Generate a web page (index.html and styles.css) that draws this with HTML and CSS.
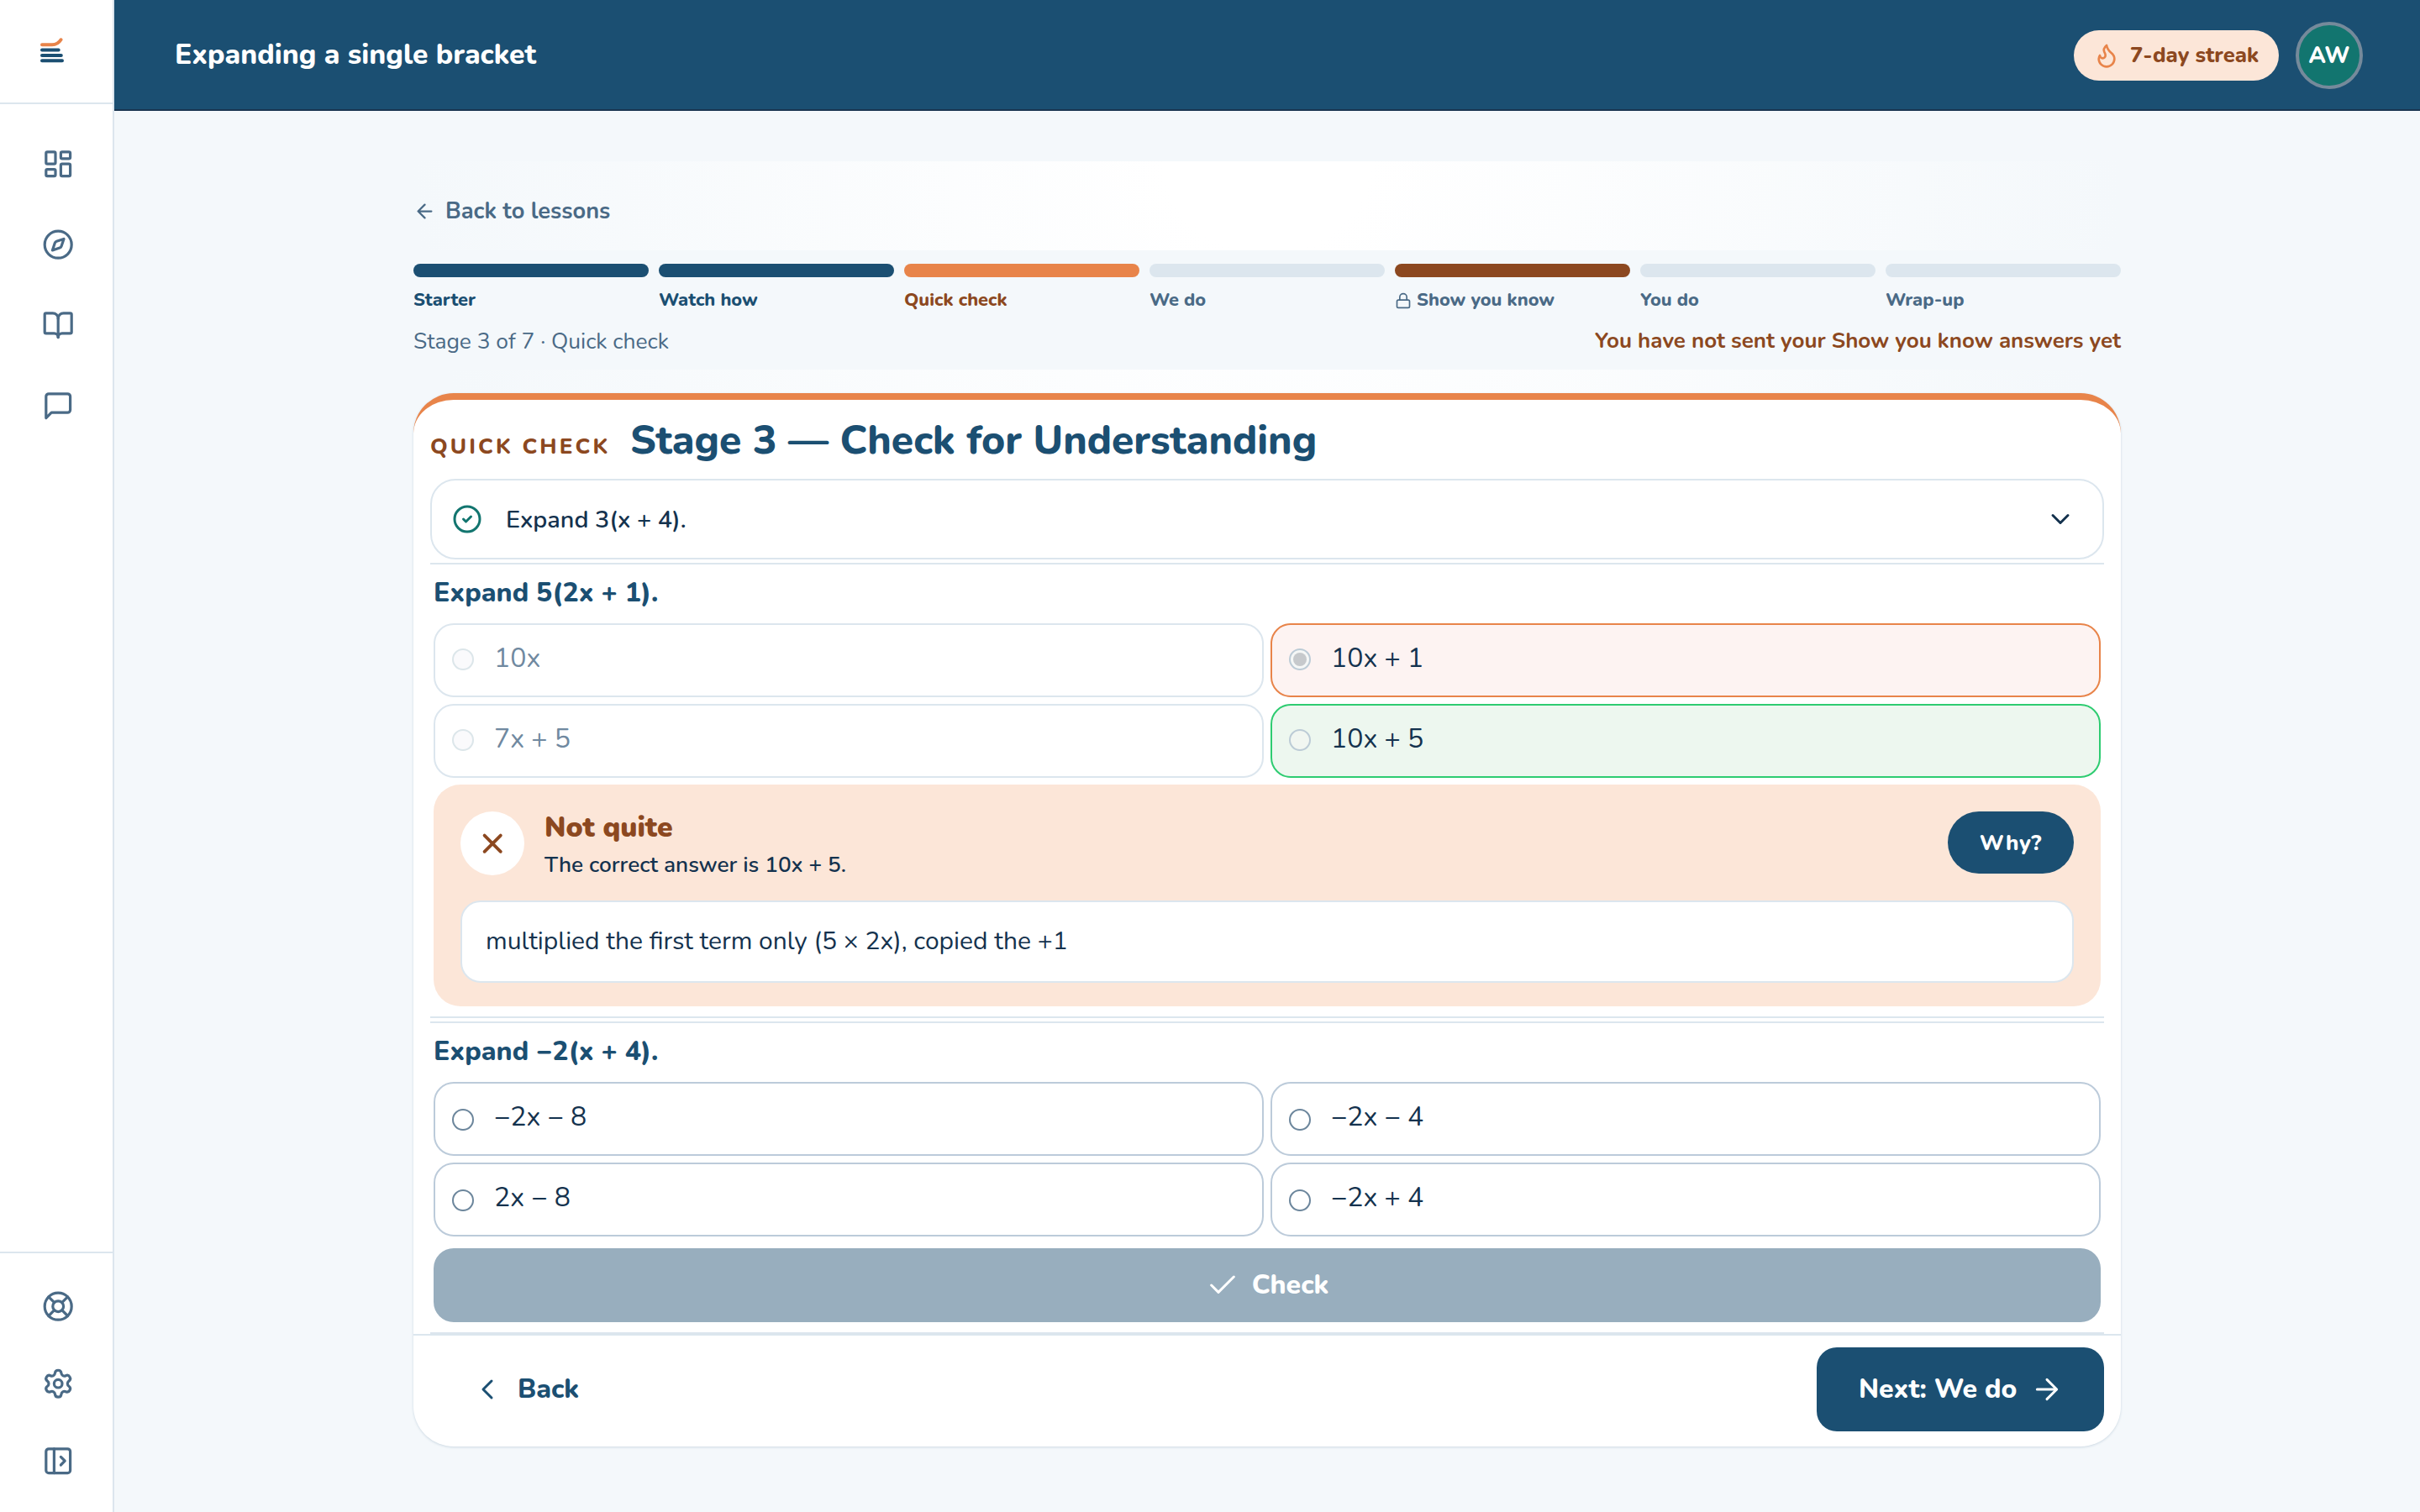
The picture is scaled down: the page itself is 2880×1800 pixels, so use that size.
FILE: index.html
```html
<!DOCTYPE html>
<html lang="en">
<head>
  <meta charset="UTF-8" />
  <meta name="viewport" content="width=device-width, initial-scale=1.0"/>
  <title>Expanding a single bracket</title>
  <link rel="stylesheet" href="styles.css">
</head>
<body>

  <aside class="sidebar">
    <div class="logo">
      <svg width="30" height="30" viewBox="0 0 30 30" fill="none" stroke="#1b4f72" stroke-width="4" stroke-linecap="round">
        <path d="M3 8.300h12c5 0 8-2 10.500-6" stroke="#e8844a"/>
        <path d="M3 14.500h19.700M3 21h22.800M3 27.300h24"/>
      </svg>
    </div>
    <nav class="nav">
      <a class="nav-link"><svg class="icon" viewBox="0 0 24 24"><rect width="7" height="9" x="3" y="3" rx="1"/><rect width="7" height="5" x="14" y="3" rx="1"/><rect width="7" height="9" x="14" y="12" rx="1"/><rect width="7" height="5" x="3" y="16" rx="1"/></svg></a>
      <a class="nav-link"><svg class="icon" viewBox="0 0 24 24"><circle cx="12" cy="12" r="10"/><path d="m16.24 7.760-1.804 5.411a2 2 0 0 1-1.265 1.265L7.760 16.240l1.804-5.411a2 2 0 0 1 1.265-1.265z"/></svg></a>
      <a class="nav-link"><svg class="icon" viewBox="0 0 24 24"><path d="M12 7v14"/><path d="M3 18a1 1 0 0 1-1-1V4a1 1 0 0 1 1-1h5a4 4 0 0 1 4 4 4 4 0 0 1 4-4h5a1 1 0 0 1 1 1v13a1 1 0 0 1-1 1h-6a3 3 0 0 0-3 3 3 3 0 0 0-3-3z"/></svg></a>
      <a class="nav-link"><svg class="icon" viewBox="0 0 24 24"><path d="M21 15a2 2 0 0 1-2 2H7l-4 4V5a2 2 0 0 1 2-2h14a2 2 0 0 1 2 2z"/></svg></a>
    </nav>
    <div class="nav-bottom">
      <a class="nav-link"><svg class="icon" viewBox="0 0 24 24"><circle cx="12" cy="12" r="10"/><path d="m4.930 4.930 4.240 4.240M14.830 9.170l4.240-4.240M14.830 14.830l4.240 4.240M9.170 14.830l-4.240 4.240"/><circle cx="12" cy="12" r="4"/></svg></a>
      <a class="nav-link"><svg class="icon" viewBox="0 0 24 24"><path d="M9.671 4.136a2.340 2.340 0 0 1 4.659 0 2.340 2.340 0 0 0 3.319 1.915 2.340 2.340 0 0 1 2.330 4.033 2.340 2.340 0 0 0 0 3.831 2.340 2.340 0 0 1-2.330 4.033 2.340 2.340 0 0 0-3.319 1.915 2.340 2.340 0 0 1-4.659 0 2.340 2.340 0 0 0-3.320-1.915 2.340 2.340 0 0 1-2.330-4.033 2.340 2.340 0 0 0 0-3.831A2.340 2.340 0 0 1 6.350 6.051a2.340 2.340 0 0 0 3.319-1.915"/><circle cx="12" cy="12" r="3"/></svg></a>
      <a class="nav-link"><svg class="icon" viewBox="0 0 24 24"><rect width="18" height="18" x="3" y="3" rx="2"/><path d="M9 3v18"/><path d="m14 9 3 3-3 3"/></svg></a>
    </div>
  </aside>

  <div class="page">
    <header class="header">
      <h1 class="header-title">Expanding a single bracket</h1>
      <div class="streak">
        <svg class="icon icon-flame" viewBox="0 0 24 24"><path d="M8.500 14.500A2.500 2.500 0 0 0 11 12c0-1.380-.5-2-1-3-1.072-2.143-.224-4.054 2-6 .5 2.500 2 4.900 4 6.500 2 1.600 3 3.500 3 5.500a7 7 0 1 1-14 0c0-1.153.433-2.294 1-3a2.500 2.500 0 0 0 2.500 2.500z"/></svg>
        <span>7-day streak</span>
      </div>
      <div class="avatar">AW</div>
    </header>

    <main class="lesson">
      <a class="back-link">
        <svg class="icon icon-back" viewBox="0 0 24 24"><path d="m12 19-7-7 7-7M19 12H5"/></svg>
        <span>Back to lessons</span>
      </a>

      <section class="progress">
        <ol class="stages">
          <li class="stage done"><i></i><span>Starter</span></li>
          <li class="stage done"><i></i><span>Watch how</span></li>
          <li class="stage current"><i></i><span>Quick check</span></li>
          <li class="stage"><i></i><span>We do</span></li>
          <li class="stage locked"><i></i><svg class="icon icon-lock" viewBox="0 0 24 24"><rect width="18" height="11" x="3" y="11" rx="2"/><path d="M7 11V7a5 5 0 0 1 10 0v4"/></svg><span>Show you know</span></li>
          <li class="stage"><i></i><span>You do</span></li>
          <li class="stage"><i></i><span>Wrap-up</span></li>
        </ol>
        <div class="progress-text">
          <span class="stage-count">Stage 3 of 7 · Quick check</span>
          <span class="not-sent">You have not sent your Show you know answers yet</span>
        </div>
      </section>

      <article class="card">
        <div class="card-head">
          <span class="eyebrow">QUICK CHECK</span>
          <h2 class="card-title">Stage 3 — Check for Understanding</h2>
        </div>

        <div class="answered">
          <svg class="icon icon-done" viewBox="0 0 24 24"><circle cx="12" cy="12" r="10"/><path d="m9 12 2 2 4-4"/></svg>
          <span class="answered-text">Expand 3(x + 4).</span>
          <svg class="icon icon-chevron" viewBox="0 0 24 24"><path d="m6 9 6 6 6-6"/></svg>
        </div>

        <div class="question">
          <h3 class="question-title">Expand 5(2x + 1).</h3>
          <div class="options answered-options">
            <label class="option faded"><span class="radio"></span><span class="option-text">10x</span></label>
            <label class="option wrong"><span class="radio picked"></span><span class="option-text">10x + 1</span></label>
            <label class="option faded"><span class="radio"></span><span class="option-text">7x + 5</span></label>
            <label class="option right"><span class="radio"></span><span class="option-text">10x + 5</span></label>
          </div>
          <div class="feedback">
            <div class="feedback-top">
              <div class="feedback-icon"><svg class="icon" viewBox="0 0 24 24"><path d="M18 6 6 18M6 6l12 12"/></svg></div>
              <div class="feedback-text">
                <strong>Not quite</strong>
                <span>The correct answer is 10x + 5.</span>
              </div>
              <button class="why-btn">Why?</button>
            </div>
            <div class="feedback-note">multiplied the first term only (5 × 2x), copied the +1</div>
          </div>
        </div>

        <div class="question">
          <h3 class="question-title">Expand −2(x + 4).</h3>
          <div class="options">
            <label class="option"><span class="radio"></span><span class="option-text">−2x − 8</span></label>
            <label class="option"><span class="radio"></span><span class="option-text">−2x − 4</span></label>
            <label class="option"><span class="radio"></span><span class="option-text">2x − 8</span></label>
            <label class="option"><span class="radio"></span><span class="option-text">−2x + 4</span></label>
          </div>
          <button class="check-btn">
            <svg class="icon" viewBox="0 0 24 24"><path d="M20 6 9 17l-5-5"/></svg>
            <span>Check</span>
          </button>
        </div>

        <footer class="card-footer">
          <button class="back-btn">
            <svg class="icon" viewBox="0 0 24 24"><path d="m15 18-6-6 6-6"/></svg>
            <span>Back</span>
          </button>
          <button class="next-btn">
            <span>Next: We do</span>
            <svg class="icon" viewBox="0 0 24 24"><path d="M5 12h14M12 5l7 7-7 7"/></svg>
          </button>
        </footer>
      </article>
    </main>
  </div>

</body>
</html>
```
FILE: styles.css
```css
* {
  box-sizing: border-box;
}
body {
  margin: 0;
  display: flex;
  height: 1800px;
  background: #f4f8fb;
  font-family: Nunito, Lato, sans-serif;
  color: #14324e;
  overflow: hidden;
}
h1, h2, h3, ol {
  margin: 0;
  padding: 0;
}
button {
  border: none;
  font-family: inherit;
  padding: 0;
}
.icon {
  width: 38.4px;
  height: 38.4px;
  fill: none;
  stroke: currentColor;
  stroke-width: 2;
  stroke-linecap: round;
  stroke-linejoin: round;
  flex: none;
  display: block;
}

/* sidebar */
.sidebar {
  width: 136px;
  flex: none;
  background: #fff;
  border-right: 2px solid #dce6ee;
  display: flex;
  flex-direction: column;
  color: #4a6a86;
}
.logo {
  height: 124px;
  border-bottom: 2px solid #dce6ee;
  padding: 45px 0 0 47px;
}
.nav {
  flex: 1;
  padding: 23px 0 0 4px;
}
.nav-link {
  height: 96px;
  display: flex;
  align-items: center;
  justify-content: center;
}
.nav-bottom {
  height: 310px;
  border-top: 2px solid #dce6ee;
  padding: 17px 0 0 4px;
}
.nav-bottom .nav-link {
  height: 92px;
}

/* header */
.page {
  flex: 1;
}
.header {
  height: 132px;
  background: #1b4f72;
  border-bottom: 2px solid #1a3550;
  padding: 2px 68px 0 72px;
  display: flex;
  align-items: center;
}
.header-title {
  flex: 1;
  color: #fff;
  font-size: 33.6px;
  font-weight: 800;
  line-height: 40px;
  padding-bottom: 2px;
}
.streak {
  height: 60px;
  width: 244px;
  border-radius: 30px;
  background: #fce6d8;
  color: #8c4820;
  font-size: 25.6px;
  font-weight: 800;
  white-space: nowrap;
  display: flex;
  align-items: center;
  gap: 12px;
  padding-left: 23px;
  margin-right: 20px;
}
.streak span {
  padding-bottom: 2px;
}
.icon-flame {
  width: 32px;
  height: 32px;
  color: #e8844a;
}
.avatar {
  width: 80px;
  height: 80px;
  border-radius: 50%;
  border: 4px solid #758a9b;
  background: #12756f;
  color: #fff;
  font-size: 27px;
  font-weight: 800;
  display: flex;
  align-items: center;
  justify-content: center;
}

/* lesson */
.lesson {
  width: 2032px;
  margin: 60px 0 0 356px;
  background: radial-gradient(1016px 900px at 50% 0, #fff 12%, #f4f8fb 100%);
}
.back-link {
  height: 106px;
  padding-top: 12px;
  display: flex;
  align-items: center;
  gap: 11px;
  color: #4a6a86;
  font-size: 27.2px;
  font-weight: 700;
}
.icon-back {
  width: 27px;
  height: 27px;
}
.progress {
  height: 142px;
  padding-top: 16px;
  background: #f4f8fb;
}
.stages {
  list-style: none;
  display: grid;
  grid-template-columns: repeat(7, 1fr);
  gap: 12px;
  color: #4a6a86;
  font-size: 21.8px;
  font-weight: 800;
}
.stage {
  display: flex;
  flex-wrap: wrap;
  align-items: center;
  line-height: 28px;
}
.stage i {
  width: 100%;
  height: 16px;
  border-radius: 8px;
  background: #dce6ee;
  margin-bottom: 13px;
}
.done {
  color: #1b4f72;
}
.done i {
  background: #1b4f72;
}
.current {
  color: #8c4820;
}
.current i {
  background: #e8844a;
}
.locked i {
  background: #8c4820;
}
.icon-lock {
  width: 20px;
  height: 20px;
  margin: 2px 6px 0 0;
}
.progress-text {
  display: flex;
  justify-content: space-between;
  margin-top: 17px;
  font-size: 26px;
  line-height: 36px;
}
.stage-count {
  color: #4a6a86;
  font-size: 26.4px;
}
.not-sent {
  color: #8c4820;
  font-weight: 700;
}

/* card */
.card {
  background: #fff;
  border-top: 8px solid #e8844a;
  border-radius: 48px;
  height: 1254px;
  margin-top: 28px;
  box-shadow: 0 1px 3px rgba(27, 79, 114, 0.18);
}
.card-head {
  height: 94px;
  padding: 0 20px;
  display: flex;
  align-items: baseline;
  line-height: 97px;
}
.eyebrow {
  width: 238px;
  color: #8c4820;
  font-size: 26px;
  font-weight: 800;
  letter-spacing: 0.12em;
}
.card-title {
  color: #1b4f72;
  font-size: 48px;
  font-weight: 800;
}
.answered {
  height: 96px;
  margin: 0 20px 4px;
  border: 2px solid #dce6ee;
  border-radius: 30px;
  padding: 0 32px 0 24px;
  display: flex;
  align-items: center;
}
.answered-text {
  flex: 1;
  font-size: 28.8px;
  font-weight: 600;
  padding-left: 28px;
}
.icon-done {
  width: 36px;
  height: 36px;
  color: #12756f;
}
.icon-chevron {
  width: 36px;
  height: 36px;
}
.question {
  margin: 0 20px 4px;
  padding: 0 4px 12px;
  border-top: 2px solid #dce6ee;
  border-bottom: 2px solid #dce6ee;
}
.question-title {
  color: #1b4f72;
  font-size: 32px;
  font-weight: 800;
  line-height: 67px;
  margin-bottom: 3px;
}
.options {
  display: grid;
  grid-template-columns: 1fr 1fr;
  gap: 8px;
}
.option {
  height: 88px;
  border: 2px solid #bccbda;
  border-radius: 24px;
  padding: 20px 20px 0;
  display: flex;
  align-items: flex-start;
}
.radio {
  width: 26px;
  height: 26px;
  margin-top: 10px;
  border: 2px solid #6c869c;
  border-radius: 50%;
  background: #fff;
}
.answered-options .radio {
  margin-top: 8px;
}
.option-text {
  font-size: 32px;
  line-height: 40px;
  margin-left: 24px;
}
.faded {
  border-color: #dce6ee;
  color: #7089a0;
}
.faded .radio {
  border-color: #dce6ea;
  background: #fafafc;
}
.wrong {
  border-color: #e8844a;
  background: #fdf3f2;
}
.right {
  border-color: #2ecc71;
  background: #edf7ef;
}
.wrong .radio, .right .radio {
  border-color: #bccbd6;
  background: #f5f7f6;
}
.right .radio {
  background: #f1f6f1;
}
.picked::before {
  content: "";
  display: block;
  width: 16px;
  height: 16px;
  margin: 3px;
  border-radius: 50%;
  background: #c6c9cc;
}
.feedback {
  height: 264px;
  margin-top: 8px;
  padding: 32px;
  border-radius: 32px;
  background: #fce6d8;
}
.feedback-top {
  height: 76px;
  display: flex;
  align-items: center;
}
.feedback-icon {
  width: 76px;
  height: 76px;
  border-radius: 50%;
  background: #fff;
  color: #8c4820;
  display: flex;
  align-items: center;
  justify-content: center;
}
.feedback-icon .icon {
  stroke-width: 2.4;
}
.feedback-text {
  flex: 1;
  padding: 3px 0 0 24px;
  display: flex;
  flex-direction: column;
  gap: 5px;
  font-size: 26.2px;
  line-height: 36px;
  font-weight: 600;
}
.feedback-text strong {
  color: #8c4820;
  font-size: 33.6px;
  line-height: 44px;
  font-weight: 900;
}
.why-btn {
  width: 150px;
  height: 74px;
  margin-bottom: 2px;
  border-radius: 37px;
  background: #1b4f72;
  color: #fff;
  font-size: 26px;
  font-weight: 800;
  letter-spacing: 0.8px;
}
.feedback-note {
  height: 98px;
  margin-top: 30px;
  padding-left: 28px;
  border: 2px solid #dce6ee;
  border-radius: 24px;
  background: #fff;
  font-size: 30px;
  line-height: 94px;
}
.check-btn {
  width: 100%;
  height: 88px;
  margin-top: 14px;
  border-radius: 24px;
  background: #98aebe;
  color: #fff;
  font-size: 32px;
  font-weight: 800;
  display: flex;
  align-items: center;
  justify-content: center;
  gap: 15px;
}
.check-btn span, .card-footer span {
  padding-bottom: 1px;
}
.check-btn .icon, .card-footer .icon {
  width: 40px;
  height: 40px;
  stroke-width: 1.8;
}
.card-footer {
  margin-top: -4px;
  border-top: 2px solid #dce6ee;
  padding: 14px 20px 18px 68px;
  display: flex;
  justify-content: space-between;
}
.back-btn, .next-btn {
  height: 100px;
  background: none;
  color: #1b4f72;
  font-size: 32px;
  font-weight: 800;
  display: flex;
  align-items: center;
  gap: 16px;
}
.next-btn {
  width: 342px;
  padding-left: 50px;
  border-radius: 24px;
  background: #1b4f72;
  color: #fff;
}
```
